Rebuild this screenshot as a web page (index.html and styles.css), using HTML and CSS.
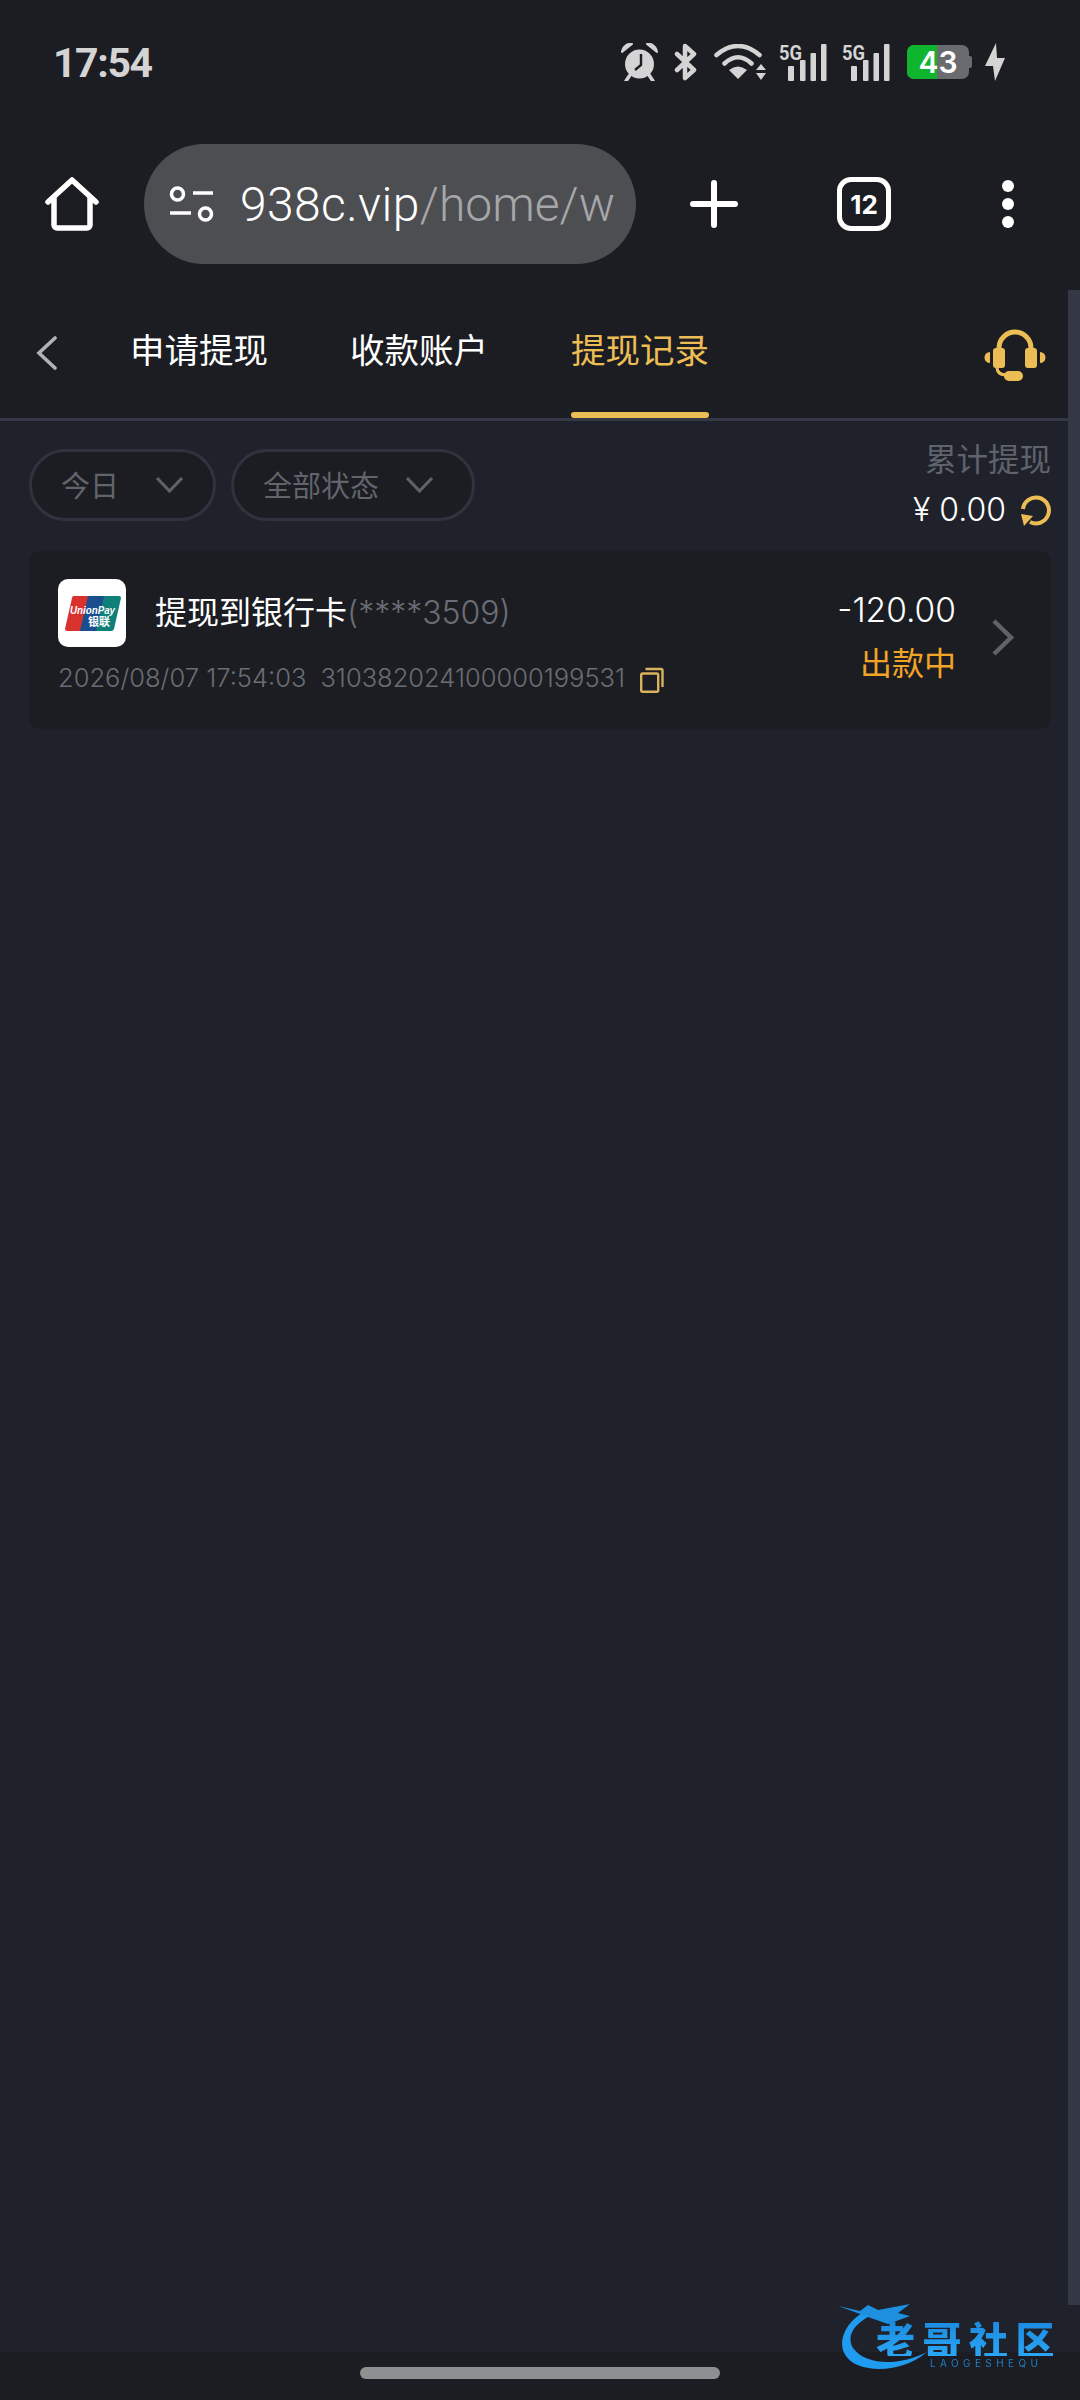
FILE: index.html
```html
<!DOCTYPE html>
<html lang="zh-CN">
<head>
    <meta charset="UTF-8">
    <meta name="viewport" content="width=device-width, initial-scale=1.0">
    <title>提现记录</title>
    <link rel="stylesheet" href="styles.css">
</head>
<body>
    <!-- phone status bar -->
    <div class="status-bar">
        <span class="time">17:54</span>
        <div class="status-icons">
            <svg class="ic-alarm" width="37" height="38" viewBox="0 0 37 38">
                <circle cx="18.5" cy="21" r="14.5" fill="#d4d4d4"/>
                <path d="M1 9 C2 3 7 0 11 1 Z M36 9 C35 3 30 0 26 1 Z" fill="#d4d4d4" stroke="#d4d4d4" stroke-width="2" stroke-linejoin="round"/>
                <path d="M9 32 L5 38 M28 32 L32 38" stroke="#d4d4d4" stroke-width="3.5" stroke-linecap="round"/>
                <path d="M20 11 V22 L14 27" fill="none" stroke="#1c1d22" stroke-width="2.4"/>
            </svg>
            <svg class="ic-bt" width="24" height="38" viewBox="0 0 24 38">
                <path d="M3 11 L20 27 L11 35 V3 L20 11 L3 27" fill="none" stroke="#d4d4d4" stroke-width="4.5" stroke-linejoin="round" stroke-linecap="round"/>
            </svg>
            <svg class="ic-wifi" width="52" height="37" viewBox="0 0 52 37">
                <path d="M2.5 11 Q24 -7 45.5 11 M10.5 19.5 Q24 7 37.5 19.5" fill="none" stroke="#d4d4d4" stroke-width="4.5" stroke-linecap="round"/>
                <path d="M15 26 Q24 19 33 26 L24 35 Z" fill="#d4d4d4"/>
                <path d="M42 26 L47 20 L52 26 Z M42 29 L47 36 L52 29 Z" fill="#d4d4d4"/>
            </svg>
            <svg class="ic-signal" width="48" height="38" viewBox="0 0 48 38">
                <text class="sig-label" x="0" y="17" textLength="23" lengthAdjust="spacingAndGlyphs">5G</text>
                <rect x="9" y="23" width="6" height="15" rx="1" fill="#d4d4d4"/>
                <rect x="21" y="17" width="5.5" height="21" rx="1" fill="#d4d4d4"/>
                <rect x="31.5" y="10" width="5.5" height="28" rx="1" fill="#d4d4d4"/>
                <rect x="42" y="1" width="5.5" height="37" rx="1" fill="#d4d4d4"/>
            </svg>
            <svg class="ic-signal ic-signal2" width="48" height="38" viewBox="0 0 48 38">
                <text class="sig-label" x="0" y="17" textLength="23" lengthAdjust="spacingAndGlyphs">5G</text>
                <rect x="9" y="23" width="6" height="15" rx="1" fill="#d4d4d4"/>
                <rect x="21" y="17" width="5.5" height="21" rx="1" fill="#d4d4d4"/>
                <rect x="31.5" y="10" width="5.5" height="28" rx="1" fill="#d4d4d4"/>
                <rect x="42" y="1" width="5.5" height="37" rx="1" fill="#d4d4d4"/>
            </svg>
            <svg class="ic-battery" width="65" height="34" viewBox="0 0 65 34">
                <rect x="0" y="0" width="62" height="34" rx="7" fill="#6a6b6f"/>
                <path d="M7 0 H30 V34 H7 a7 7 0 0 1 -7 -7 V7 a7 7 0 0 1 7 -7 Z" fill="#0fb52c"/>
                <path d="M62 11 h1 a2 2 0 0 1 2 2 v8 a2 2 0 0 1 -2 2 h-1 Z" fill="#6a6b6f"/>
                <text class="bat-label" x="31" y="28" text-anchor="middle">43</text>
            </svg>
            <svg class="ic-bolt" width="20" height="38" viewBox="0 0 20 38">
                <path d="M11 0 L0 23 H8 L10 38 L20 15 H12 Z" fill="#d4d4d4"/>
            </svg>
        </div>
    </div>

    <!-- browser toolbar -->
    <div class="toolbar">
        <svg class="btn-home" width="54" height="54" viewBox="0 0 54 54">
            <path d="M3 25 L27 3 L51 25 M9 21 V48 a3 3 0 0 0 3 3 H42 a3 3 0 0 0 3 -3 V21" fill="none" stroke="#fff" stroke-width="5.5" stroke-linecap="round" stroke-linejoin="round"/>
        </svg>
        <div class="url-pill">
            <svg class="url-tune" width="45" height="38" viewBox="0 0 45 38">
                <circle cx="8.5" cy="9" r="6" fill="none" stroke="#fff" stroke-width="3.5"/>
                <circle cx="36.5" cy="29" r="6" fill="none" stroke="#fff" stroke-width="3.5"/>
                <path d="M24 8 H44 M1 28 H22" stroke="#fff" stroke-width="3.5"/>
            </svg>
            <div class="url-text"><span class="url-host">938c.vip</span>/home/w</div>
        </div>
        <svg class="btn-plus" width="48" height="48" viewBox="0 0 48 48">
            <path d="M24 3 V45 M3 24 H45" stroke="#fff" stroke-width="6" stroke-linecap="round"/>
        </svg>
        <div class="btn-tabs">12</div>
        <div class="btn-more"><i></i><i></i><i></i></div>
    </div>

    <div class="content">
        <div class="page">
            <div class="page-head">
                <svg class="back" width="21" height="34" viewBox="0 0 21 34">
                    <path d="M19 2 L3 17 L19 32" fill="none" stroke="#aeb2ba" stroke-width="3.6" stroke-linecap="round"/>
                </svg>
                <div class="tabs">
                    <div class="tab">申请提现</div>
                    <div class="tab">收款账户</div>
                    <div class="tab active">提现记录</div>
                </div>
                <svg class="service" width="62" height="54" viewBox="0 0 62 54">
                    <path d="M15 24 V21 a16 16 0 0 1 32 0 V24" fill="none" stroke="#ecbd55" stroke-width="5"/>
                    <rect x="9" y="21" width="12" height="20" rx="3" fill="#ecbd55"/>
                    <rect x="41" y="21" width="12" height="20" rx="3" fill="#ecbd55"/>
                    <path d="M6 25 a5.5 5.5 0 0 0 0 11 Z M56 25 a5.5 5.5 0 0 1 0 11 Z" fill="#ecbd55"/>
                    <path d="M13 40 C13 46 17 48 23 48" fill="none" stroke="#ecbd55" stroke-width="3"/>
                    <rect x="20" y="44" width="19" height="10" rx="5" fill="#ecbd55"/>
                </svg>
            </div>

            <div class="filter-row">
                <div class="filters">
                    <div class="filter filter-day">
                        <span>今日</span>
                        <svg width="29" height="18" viewBox="0 0 29 18"><path d="M2 2 L14.5 15 L27 2" fill="none" stroke="#5e6169" stroke-width="3.2"/></svg>
                    </div>
                    <div class="filter">
                        <span>全部状态</span>
                        <svg width="29" height="18" viewBox="0 0 29 18"><path d="M2 2 L14.5 15 L27 2" fill="none" stroke="#5e6169" stroke-width="3.2"/></svg>
                    </div>
                </div>
                <div class="summary">
                    <div class="summary-label">累计提现</div>
                    <div class="summary-value">
                        <span>¥ 0.00</span>
                        <svg width="31" height="31" viewBox="0 0 31 31">
                            <path d="M3 14 A13 13 0 1 1 10 27" fill="none" stroke="#ecbd55" stroke-width="4"/>
                            <path d="M1 19 L13 21 L4 31 Z" fill="#ecbd55"/>
                        </svg>
                    </div>
                </div>
            </div>

            <div class="record">
                <div class="record-main">
                    <div class="record-top">
                        <div class="bank-logo">
                            <svg width="68" height="68" viewBox="0 0 68 68">
                                <path d="M16 17 H35 L27 52 H9 a2 2 0 0 1 -2 -2 L14 19 a2 2 0 0 1 2 -2 Z" fill="#d9322e"/>
                                <path d="M30 17 H50 L42 52 H22 Z" fill="#1b4e8c"/>
                                <path d="M46 17 H61 a2 2 0 0 1 2 2 L56 50 a3 3 0 0 1 -3 2 H38 Z" fill="#0f7f7a"/>
                                <text class="up-en" x="12" y="35" textLength="45" lengthAdjust="spacingAndGlyphs">UnionPay</text>
                                <text class="up-cn" x="30" y="47">银联</text>
                            </svg>
                        </div>
                        <div class="record-title">提现到银行卡<span class="card-no">(****3509)</span></div>
                    </div>
                    <div class="record-meta">
                        <span class="meta-date">2026/08/07 17:54:03</span>
                        <span class="meta-no">310382024100000199531</span>
                        <svg width="24" height="26" viewBox="0 0 24 26">
                            <rect x="1.2" y="6.5" width="17" height="18.3" rx="1.5" fill="none" stroke="#d9b25c" stroke-width="2.4"/>
                            <path d="M5.5 2 H21 a1.5 1.5 0 0 1 1.5 1.5 V20" fill="none" stroke="#d9b25c" stroke-width="2.4"/>
                        </svg>
                    </div>
                </div>
                <div class="record-side">
                    <div class="amount">-120.00</div>
                    <div class="state">出款中</div>
                </div>
                <svg class="record-go" width="23" height="37" viewBox="0 0 23 37">
                    <path d="M3 2 L20 18.5 L3 35" fill="none" stroke="#5f626a" stroke-width="4.5"/>
                </svg>
            </div>
        </div>
        <div class="scrollbar"></div>
    </div>

    <div class="nav-bar"><div class="home-pill"></div></div>

    <!-- watermark stamped over the screenshot -->
    <div class="watermark">
        <svg width="100" height="74" viewBox="0 0 100 74">
            <path d="M26 14 C8 24 -2 44 8 58 C18 74 60 78 89 54 C62 68 28 68 15 50 C8 38 16 26 32 18 Z" fill="#1f9bf0"/>
            <path d="M0 8 L22 13 L30 7 L40 12 L72 6 L60 15 L72 18 L50 26 L30 19 L14 13 Z" fill="#1f8fe0"/>
        </svg>
        <div class="wm-title">老哥社区</div>
        <div class="wm-sub">LAOGESHEQU</div>
    </div>
</body>
</html>
```

FILE: styles.css
```css
* {
    box-sizing: border-box;
}

body {
    position: relative;
    width: 1080px;
    height: 2400px;
    margin: 0;
    overflow: hidden;
    display: flex;
    flex-direction: column;
    background-color: #1f222a;
    color: #fff;
    font-family: Inter, "Noto Sans CJK SC", sans-serif;
}

/* status bar */
.status-bar {
    height: 124px;
    display: flex;
    align-items: center;
    justify-content: space-between;
    padding: 0 75px 0 53px;
    background: #1c1d22;
}

.time {
    font-family: Roboto, sans-serif;
    font-size: 41px;
    font-weight: 700;
    letter-spacing: -1.4px;
    color: #d4d4d4;
    margin-top: 1px;
}

.status-icons {
    display: flex;
    align-items: center;
}

.ic-bt { margin-left: 16px; }
.ic-wifi { margin-left: 16px; }
.ic-signal { margin-left: 13px; overflow: visible; }
.ic-signal2 { margin-left: 15px; }
.ic-battery { margin-left: 17px; }
.ic-bolt { margin-left: 13px; }

.sig-label {
    font-family: Roboto, sans-serif;
    font-size: 21px;
    font-weight: 700;
    fill: #d4d4d4;
}

.bat-label {
    font-family: Inter, sans-serif;
    font-size: 30px;
    font-weight: 600;
    fill: #fff;
}

/* browser toolbar */
.toolbar {
    height: 166px;
    display: flex;
    align-items: center;
    padding: 0 0 6px 45px;
    background: #1c1d22;
}

.url-pill {
    width: 492px;
    height: 120px;
    margin-left: 45px;
    padding: 0 22px 0 25px;
    border-radius: 60px;
    background: #4d4e52;
    display: flex;
    align-items: center;
}

.url-tune {
    flex-shrink: 0;
}

.url-text {
    margin-left: 26px;
    flex: 1;
    white-space: nowrap;
    font-family: Roboto, sans-serif;
    font-size: 48px;
    font-weight: 300;
    color: #a6a7aa;
}

.url-host {
    letter-spacing: 0.4px;
    color: #fff;
}

.btn-plus {
    margin-left: 54px;
}

.btn-tabs {
    width: 54px;
    height: 54px;
    margin-left: 99px;
    border: 5.5px solid #fff;
    border-radius: 14px;
    display: flex;
    align-items: center;
    justify-content: center;
    font-size: 26px;
    font-weight: 700;
}

.btn-more {
    margin-left: 111px;
    display: flex;
    flex-direction: column;
    gap: 6px;
}

.btn-more i {
    display: block;
    width: 12px;
    height: 12px;
    border-radius: 50%;
    background: #fff;
}

/* page */
.content {
    flex: 1;
    display: flex;
}

.page {
    flex: 1;
}

.scrollbar {
    width: 12px;
    margin-bottom: 47px;
    background: #333844;
}

.page-head {
    height: 131px;
    display: flex;
    padding: 0 22px 0 36px;
    background: #1c1d22;
    border-bottom: 3px solid #333844;
}

.back {
    margin-top: 46px;
}

.tabs {
    display: flex;
    gap: 82px;
    margin-left: 73px;
}

.tab {
    position: relative;
    width: 138px;
    height: 128px;
    padding-top: 38px;
    font-size: 34.5px;
    line-height: 46px;
    white-space: nowrap;
}

.tab.active {
    margin-left: 1px;
    color: #ecbd55;
}

.tab.active::after {
    content: "";
    position: absolute;
    left: 0;
    right: 0;
    bottom: 0;
    height: 6px;
    border-radius: 3px;
    background: #ecbd55;
}

.service {
    margin: 37px 0 0 auto;
}

.filter-row {
    height: 129px;
    display: flex;
    justify-content: space-between;
    padding: 0 17px 0 29px;
}

.filters {
    display: flex;
    gap: 15px;
    margin-top: 28px;
}

.filter {
    height: 72px;
    padding: 0 38px 0 29px;
    display: flex;
    align-items: center;
    gap: 26px;
    border: 3px solid #2f333d;
    border-radius: 36px;
    background: #1c1d22;
    font-size: 29px;
    color: #61646c;
}

.filter span {
    margin-top: -3px;
}

.filter-day {
    gap: 36px;
    padding-right: 29px;
}

.summary {
    margin-top: 17px;
    display: flex;
    flex-direction: column;
    align-items: flex-end;
}

.summary-label {
    font-size: 31.5px;
    line-height: 44px;
    color: #5f636c;
}

.summary-value {
    margin-top: 10px;
    display: flex;
    align-items: center;
    gap: 14px;
    font-size: 32px;
    font-weight: 300;
    line-height: 36px;
}

/* withdraw record */
.record {
    height: 180px;
    margin: 0 17px 0 29px;
    padding: 29px 37px 0 29px;
    display: flex;
    border-radius: 14px;
    background: #1c1d22;
}

.record-main {
    flex: 1;
}

.record-top {
    display: flex;
    align-items: center;
    gap: 29px;
}

.bank-logo {
    width: 68px;
    height: 68px;
    border-radius: 10px;
    background: #fff;
}

.up-en {
    font-family: "Liberation Sans", sans-serif;
    font-size: 11px;
    font-weight: 700;
    font-style: italic;
    fill: #fff;
}

.up-cn {
    font-family: "Noto Sans CJK SC", sans-serif;
    font-size: 11px;
    font-weight: 700;
    fill: #fff;
}

.record-title {
    font-size: 32px;
    line-height: 44px;
    margin-top: 0;
}

.card-no {
    font-weight: 300;
    font-size: 32px;
    color: #6a6d75;
}

.record-meta {
    margin-top: 14px;
    display: flex;
    align-items: center;
    font-size: 25.5px;
    font-weight: 300;
    line-height: 34px;
    color: #6a6d75;
}

.meta-no {
    margin-left: 14px;
}

.record-meta svg {
    margin: 3px 0 0 15px;
}

.record-side {
    text-align: right;
}

.amount {
    font-size: 33.5px;
    font-weight: 300;
    line-height: 42px;
    margin-top: 10px;
}

.state {
    margin-top: 12px;
    font-size: 32px;
    line-height: 42px;
    color: #f2a426;
}

.record-go {
    margin: 40px 0 0 35px;
}

/* bottom gesture bar */
.nav-bar {
    height: 48px;
    padding-top: 15px;
    background: #1c1d22;
}

.home-pill {
    width: 360px;
    height: 12px;
    margin: 0 auto;
    border-radius: 6px;
    background: #8e8f91;
}

/* watermark */
.watermark {
    position: absolute;
    left: 838px;
    top: 2298px;
    width: 224px;
    height: 74px;
    filter: blur(0.5px);
}

.wm-title {
    position: absolute;
    left: 38px;
    top: 22px;
    font-family: "Noto Sans CJK SC", sans-serif;
    font-size: 39px;
    font-weight: 900;
    line-height: 36px;
    letter-spacing: 7.5px;
    white-space: nowrap;
    background: linear-gradient(#1b8ae0, #2aa6f5);
    -webkit-background-clip: text;
    background-clip: text;
    color: transparent;
}

.wm-sub {
    position: absolute;
    left: 92px;
    top: 59px;
    font-size: 10px;
    line-height: 12px;
    letter-spacing: 4.4px;
    white-space: nowrap;
    color: #1f7fc8;
}
```
